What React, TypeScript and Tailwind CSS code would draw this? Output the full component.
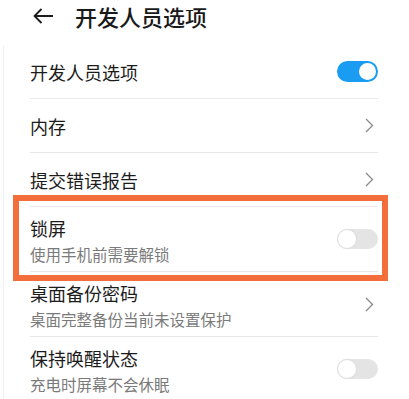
import React from "react";

const font = { fontFamily: '"Noto Sans CJK SC", "Noto Sans", sans-serif' };

function ToggleOn() {
  return (
    <div className="w-[41px] h-[21px] rounded-full bg-[#1a9cf2] flex items-center justify-end pr-[2px]">
      <div className="w-[17px] h-[17px] rounded-full bg-white" />
    </div>
  );
}

function ToggleOff() {
  return (
    <div className="w-[41px] h-[20px] rounded-full bg-[#e4e4e4] flex items-center">
      <div className="w-[20px] h-[20px] rounded-full bg-white border border-[#dcdcdc]" />
    </div>
  );
}

function Chevron() {
  return (
    <svg width="9" height="15" viewBox="0 0 9 15" className="mr-[4px]">
      <path d="M1 1 L7.5 7.5 L1 14" fill="none" stroke="#8a8a8a" strokeWidth="1.3" />
    </svg>
  );
}

function Divider() {
  return <div className="h-px bg-[#e8e8e8]" />;
}

function SingleRow({ title, right }: { title: string; right: React.ReactNode }) {
  return (
    <div className="h-[53px] flex items-center justify-between">
      <span className="text-[18px] leading-[18px] text-[#1c1c1c]">{title}</span>
      {right}
    </div>
  );
}

function DoubleRow({ title, sub, right }: { title: string; sub: string; right: React.ReactNode }) {
  return (
    <div className="h-[64px] flex items-center justify-between">
      <div className="flex flex-col pt-[3px]">
        <span className="text-[18px] leading-[18px] text-[#1c1c1c]">{title}</span>
        <span className="mt-[9px] text-[15.5px] leading-[16px] text-[#7a7a7a]">{sub}</span>
      </div>
      {right}
    </div>
  );
}

export default function App() {
  return (
    <div className="relative w-[409px] h-[399px] bg-white overflow-hidden" style={font}>
      <div className="h-[45px] flex items-start pt-[5px]">
        <div className="flex items-center h-[22px] pl-[33px]">
          <svg width="21" height="16" viewBox="0 0 21 16">
            <path d="M20 8 H1.5 M8.5 1 L1.5 8 L8.5 15" fill="none" stroke="#1c1c1c" strokeWidth="1.8" strokeLinejoin="miter" />
          </svg>
          <span className="ml-[21px] text-[22px] leading-[22px] font-medium text-[#1a1a1a]">开发人员选项</span>
        </div>
      </div>
      <div className="ml-[3px] border-l border-[#f1f1f1] pl-[26px] pr-[31px]">
        <SingleRow title="开发人员选项" right={<ToggleOn />} />
        <Divider />
        <SingleRow title="内存" right={<Chevron />} />
        <Divider />
        <SingleRow title="提交错误报告" right={<Chevron />} />
        <Divider />
        <DoubleRow title="锁屏" sub="使用手机前需要解锁" right={<ToggleOff />} />
        <Divider />
        <DoubleRow title="桌面备份密码" sub="桌面完整备份当前未设置保护" right={<Chevron />} />
        <Divider />
        <DoubleRow title="保持唤醒状态" sub="充电时屏幕不会休眠" right={<ToggleOff />} />
      </div>
      <div className="absolute left-[13px] top-[195px] w-[375px] h-[86px] border-[6px] border-[#f36e3a]" />
    </div>
  );
}
